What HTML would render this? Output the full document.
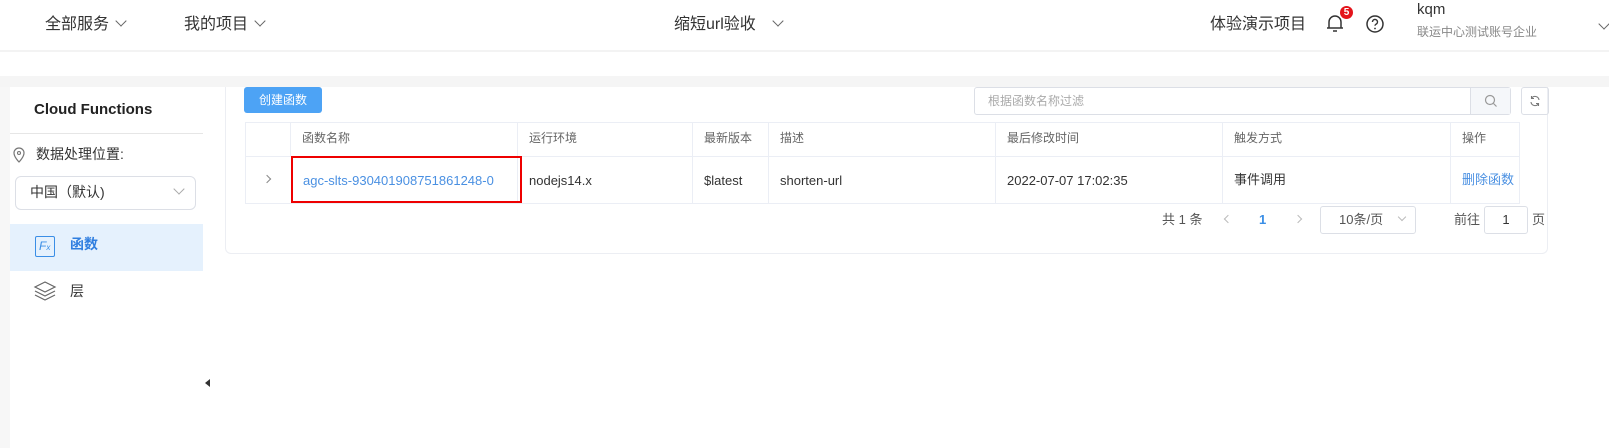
<!DOCTYPE html>
<html><head><meta charset="utf-8"><style>
*{margin:0;padding:0;box-sizing:border-box}
body{width:1609px;height:448px;overflow:hidden;background:#fff;font-family:"Liberation Sans","Noto Sans CJK SC",sans-serif;color:#333;position:relative}
.a{position:absolute;white-space:nowrap;line-height:1.2}
.chev{display:inline-block;width:8px;height:8px;border-right:1px solid #666;border-bottom:1px solid #666;transform:rotate(45deg);margin-left:8px;position:relative;top:-4px}
.th{font-size:12px;color:#666}
.td{font-size:13px;color:#333}
.vl{position:absolute;width:1px;background:#ebeef5}
</style></head><body>
<div class="a" style="left:0;top:0;width:1609px;height:52px;border-bottom:2px solid #f3f3f3"></div>
<div class="a" style="left:45px;top:15px;font-size:16px">全部服务<span class="chev"></span></div>
<div class="a" style="left:184px;top:15px;font-size:16px">我的项目<span class="chev"></span></div>
<div class="a" style="left:674px;top:15px;font-size:16px">缩短url验收<span class="chev" style="margin-left:18px"></span></div>
<div class="a" style="left:1210px;top:15px;font-size:16px">体验演示项目</div>
<svg class="a" style="left:1324px;top:12px" width="22" height="22" viewBox="0 0 22 22"><path d="M5 16V10a6 6 0 0 1 12 0v6zM3 16h16M9 19h4" fill="none" stroke="#333" stroke-width="1.5"/></svg>
<div class="a" style="left:1340px;top:6px;width:13px;height:13px;border-radius:50%;background:#e4141b;color:#fff;font-size:10px;font-weight:bold;text-align:center;line-height:13px">5</div>
<svg class="a" style="left:1365px;top:14px" width="20" height="20" viewBox="0 0 20 20"><circle cx="10" cy="10" r="8" fill="none" stroke="#333" stroke-width="1.5"/><path d="M7.5 8a2.5 2.5 0 1 1 3.5 2.2c-.7.4-1 .8-1 1.6" fill="none" stroke="#333" stroke-width="1.4"/><circle cx="10" cy="14.5" r=".9" fill="#333"/></svg>
<div class="a" style="left:1417px;top:1px;font-size:15px">kqm</div>
<div class="a" style="left:1417px;top:25px;font-size:12px;color:#888">联运中心测试账号企业</div>
<div class="a" style="left:1600px;top:20px;width:8px;height:8px;border-right:1px solid #666;border-bottom:1px solid #666;transform:rotate(45deg)"></div>
<div class="a" style="left:0;top:76px;width:1609px;height:11px;background:#f5f5f5"></div>
<div class="a" style="left:0;top:87px;width:10px;height:361px;background:#f7f7f7"></div>
<div class="a" style="left:10px;top:87px;width:193px;height:361px;background:#fff"></div>
<div class="a" style="left:34px;top:101px;font-size:15px;font-weight:bold;color:#222">Cloud Functions</div>
<div class="a" style="left:10px;top:133px;width:193px;height:1px;background:#e6e6e6"></div>
<svg class="a" style="left:11px;top:146px" width="16" height="18" viewBox="0 0 16 18"><path d="M8 16s5-5 5-9a5 5 0 0 0-10 0c0 4 5 9 5 9z" fill="none" stroke="#777" stroke-width="1.2"/><circle cx="8" cy="7" r="1.5" fill="none" stroke="#777" stroke-width="1.1"/></svg>
<div class="a" style="left:36px;top:146px;font-size:14px;color:#333">数据处理位置:</div>
<div class="a" style="left:15px;top:176px;width:181px;height:34px;border:1px solid #dcdfe6;border-radius:6px"></div>
<div class="a" style="left:30px;top:184px;font-size:14px">中国（默认)</div>
<div class="a" style="left:175px;top:185px;width:8px;height:8px;border-right:1px solid #aaa;border-bottom:1px solid #aaa;transform:rotate(45deg)"></div>
<div class="a" style="left:10px;top:224px;width:193px;height:47px;background:#e5f1fd"></div>
<div class="a" style="left:35px;top:236px;width:20px;height:21px;border:1.5px solid #3a8ee6;border-radius:2px;color:#3a8ee6;font-size:12px;line-height:18px;padding-left:3px;font-style:italic">F<span style="font-size:8px">x</span></div>
<div class="a" style="left:70px;top:236px;font-size:14px;font-weight:bold;color:#2f7ee0">函数</div>
<svg class="a" style="left:33px;top:280px" width="24" height="22" viewBox="0 0 24 22"><path d="M12 2l10 5-10 5L2 7zM2 11l10 5 10-5M2 15l10 5 10-5" fill="none" stroke="#666" stroke-width="1.2"/></svg>
<div class="a" style="left:70px;top:283px;font-size:14px">层</div>
<div class="a" style="left:205px;top:379px;width:0;height:0;border-top:4px solid transparent;border-bottom:4px solid transparent;border-right:5px solid #333"></div>
<div class="a" style="left:225px;top:87px;width:1323px;height:167px;border:1px solid #eceef3;border-top:none;border-radius:0 0 6px 6px"></div>
<div class="a" style="left:244px;top:87px;width:78px;height:26px;background:#4da3f5;border-radius:3px;color:#fff;font-size:12px;text-align:center;line-height:26px">创建函数</div>
<div class="a" style="left:974px;top:87px;width:537px;height:28px;border:1px solid #dcdfe6;border-radius:3px"></div>
<div class="a" style="left:988px;top:94px;font-size:12px;color:#aaa">根据函数名称过滤</div>
<div class="a" style="left:1470px;top:88px;width:40px;height:26px;background:#f5f7fa;border-left:1px solid #dcdfe6"></div>
<svg class="a" style="left:1484px;top:94px" width="14" height="14" viewBox="0 0 14 14"><circle cx="6" cy="6" r="4.5" fill="none" stroke="#999" stroke-width="1.2"/><path d="M9.5 9.5l3 3" stroke="#999" stroke-width="1.2"/></svg>
<div class="a" style="left:1521px;top:87px;width:28px;height:28px;border:1px solid #dcdfe6;border-radius:3px"></div>
<svg class="a" style="left:1529px;top:95px" width="12" height="12" viewBox="0 0 12 12"><path d="M10 5a4 4 0 0 0-7.5-1.5M2 7a4 4 0 0 0 7.5 1.5M2.5 1v2.5H5M9.5 11V8.5H7" fill="none" stroke="#777" stroke-width="1.1"/></svg>
<div class="a" style="left:245px;top:122px;width:1275px;height:82px;border:1px solid #ebeef5"></div>
<div class="a" style="left:245px;top:156px;width:1275px;height:1px;background:#ebeef5"></div>
<div class="vl" style="left:290px;top:122px;height:34px"></div>
<div class="vl" style="left:517px;top:122px;height:82px"></div>
<div class="vl" style="left:692px;top:122px;height:82px"></div>
<div class="vl" style="left:768px;top:122px;height:82px"></div>
<div class="vl" style="left:995px;top:122px;height:82px"></div>
<div class="vl" style="left:1222px;top:122px;height:82px"></div>
<div class="vl" style="left:1450px;top:122px;height:82px"></div>
<div class="a th" style="left:302px;top:131px">函数名称</div>
<div class="a th" style="left:529px;top:131px">运行环境</div>
<div class="a th" style="left:704px;top:131px">最新版本</div>
<div class="a th" style="left:780px;top:131px">描述</div>
<div class="a th" style="left:1007px;top:131px">最后修改时间</div>
<div class="a th" style="left:1234px;top:131px">触发方式</div>
<div class="a th" style="left:1462px;top:131px">操作</div>
<div class="a" style="left:264px;top:176px;width:6px;height:6px;border-right:1px solid #888;border-top:1px solid #888;transform:rotate(45deg)"></div>
<div class="a" style="left:291px;top:156px;width:231px;height:47px;border:2px solid #e00"></div>
<div class="a td" style="left:303px;top:173px;color:#4a90e2">agc-slts-930401908751861248-0</div>
<div class="a td" style="left:529px;top:173px">nodejs14.x</div>
<div class="a td" style="left:704px;top:173px">$latest</div>
<div class="a td" style="left:780px;top:173px">shorten-url</div>
<div class="a td" style="left:1007px;top:173px">2022-07-07 17:02:35</div>
<div class="a td" style="left:1234px;top:172px">事件调用</div>
<div class="a td" style="left:1462px;top:172px;color:#4a90e2">删除函数</div>
<div class="a td" style="left:1162px;top:212px;color:#555">共 1 条</div>
<div class="a" style="left:1225px;top:216px;width:6px;height:6px;border-left:1px solid #bbb;border-bottom:1px solid #bbb;transform:rotate(45deg)"></div>
<div class="a td" style="left:1259px;top:212px;color:#3a8ee6;font-weight:bold">1</div>
<div class="a" style="left:1295px;top:216px;width:6px;height:6px;border-right:1px solid #bbb;border-top:1px solid #bbb;transform:rotate(45deg)"></div>
<div class="a" style="left:1320px;top:206px;width:96px;height:28px;border:1px solid #dcdfe6;border-radius:3px"></div>
<div class="a td" style="left:1339px;top:212px;color:#555">10条/页</div>
<div class="a" style="left:1399px;top:214px;width:6px;height:6px;border-right:1px solid #bbb;border-bottom:1px solid #bbb;transform:rotate(45deg)"></div>
<div class="a td" style="left:1454px;top:212px;color:#555">前往</div>
<div class="a" style="left:1484px;top:206px;width:44px;height:28px;border:1px solid #dcdfe6;border-radius:3px;text-align:center;line-height:26px;font-size:13px">1</div>
<div class="a td" style="left:1532px;top:212px;color:#555">页</div>
</body></html>
